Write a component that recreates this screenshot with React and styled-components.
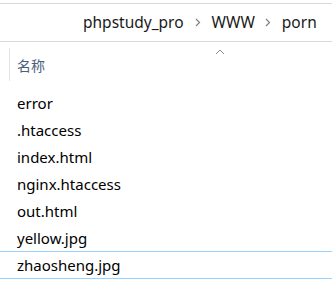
import React from "react";
import styled, { createGlobalStyle } from "styled-components";

const Global = createGlobalStyle`
  body {
    margin: 0;
    background: #ffffff;
    font-family: "Noto Sans", "Noto Sans CJK SC", sans-serif;
  }
`;

const Window = styled.div`
  width: 332px;
  height: 284px;
  overflow: hidden;
  padding-top: 3px;
  box-sizing: border-box;
`;

const AddressBar = styled.div`
  height: 37px;
  border-top: 1px solid #d9d9d9;
  border-bottom: 1px solid #d9d9d9;
  display: flex;
  align-items: center;
  padding-left: 83px;
`;

const Crumb = styled.span`
  font-size: 15.5px;
  color: #1a1a1a;
  line-height: 1;
`;

const Sep = styled.span`
  display: inline-flex;
  align-items: center;
  justify-content: center;
  width: ${(p) => p.$w}px;
`;

const Header = styled.div`
  height: 47px;
  position: relative;
  display: flex;
  align-items: flex-start;
`;

const Divider = styled.div`
  margin-left: 9px;
  margin-top: 6px;
  width: 1px;
  height: 33px;
  background: #e5e5e5;
`;

const HeaderLabel = styled.span`
  margin-left: 7px;
  margin-top: 13px;
  font-size: 14px;
  color: #4c607a;
`;

const SortCaret = styled.svg`
  position: absolute;
  left: 215px;
  top: 7px;
`;

const List = styled.div`
  display: flex;
  flex-direction: column;
`;

const Row = styled.div`
  height: ${(p) => (p.$selected ? 26 : 27)}px;
  display: flex;
  align-items: center;
  padding-left: 17px;
  font-size: 15px;
  color: #000;
  border-top: ${(p) => (p.$selected ? "1px solid #99d1ff" : "none")};
  border-bottom: ${(p) => (p.$selected ? "1px solid #99d1ff" : "none")};
`;

const Chevron = () => (
  <svg width="6" height="9" viewBox="0 0 6 9">
    <path d="M1 1 L4.5 4.5 L1 8" fill="none" stroke="#808080" strokeWidth="1.2" />
  </svg>
);

const files = [
  "error",
  ".htaccess",
  "index.html",
  "nginx.htaccess",
  "out.html",
  "yellow.jpg",
  "zhaosheng.jpg",
];

export default function App() {
  return (
    <Window>
      <Global />
      <AddressBar>
        <Crumb>phpstudy_pro</Crumb>
        <Sep $w={28}>
          <Chevron />
        </Sep>
        <Crumb>WWW</Crumb>
        <Sep $w={27}>
          <Chevron />
        </Sep>
        <Crumb>porn</Crumb>
      </AddressBar>
      <Header>
        <Divider />
        <HeaderLabel>名称</HeaderLabel>
        <SortCaret width="10" height="6" viewBox="0 0 10 6">
          <path d="M1 5 L5 1 L9 5" fill="none" stroke="#8a8a8a" strokeWidth="1" />
        </SortCaret>
      </Header>
      <List>
        {files.map((f, i) => (
          <Row key={f} $selected={i === files.length - 1}>
            {f}
          </Row>
        ))}
      </List>
    </Window>
  );
}
